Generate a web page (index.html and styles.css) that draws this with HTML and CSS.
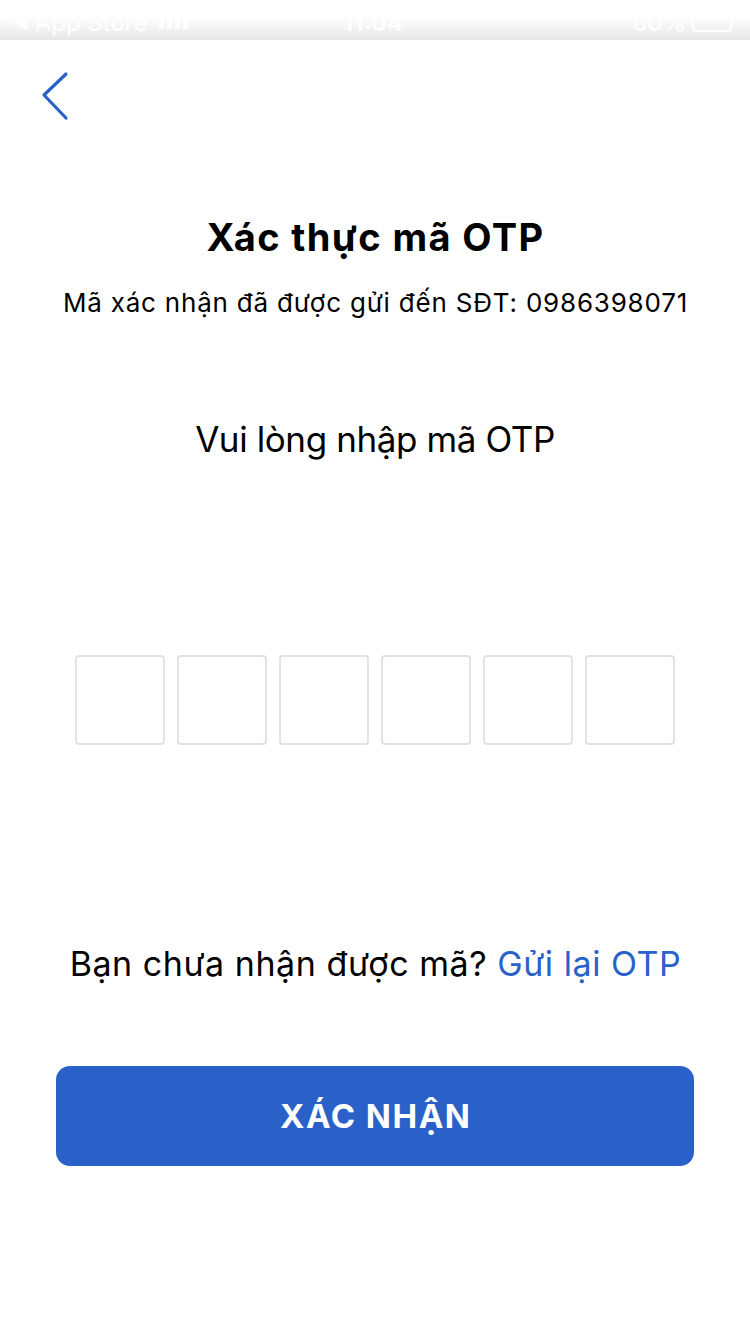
FILE: index.html
```html
<!DOCTYPE html>
<html lang="vi">
<head>
<meta charset="utf-8">
<title>Xác thực mã OTP</title>
<link rel="stylesheet" href="styles.css">
</head>
<body>
<div class="statusbar">
  <div class="sb-left"><span class="sb-back">◀</span> App Store <span class="sb-signal"><i></i><i></i><i></i><i></i></span></div>
  <div class="sb-time">11:04</div>
  <div class="sb-right">60% <span class="sb-batt"></span></div>
</div>
<main class="sheet">
  <div class="nav">
    <svg class="back" width="30" height="50" viewBox="0 0 30 50" aria-label="Quay lại">
      <path d="M26 3 L4 24 L26 47" fill="none" stroke="#2961C9" stroke-width="3.2" stroke-linecap="round" stroke-linejoin="round"/>
    </svg>
  </div>
  <h1 class="title">Xác thực mã OTP</h1>
  <p class="subtitle">Mã xác nhận đã được gửi đến SĐT: 0986398071</p>
  <p class="prompt">Vui lòng nhập mã OTP</p>
  <div class="otp">
    <div class="cell"></div>
    <div class="cell"></div>
    <div class="cell"></div>
    <div class="cell"></div>
    <div class="cell"></div>
    <div class="cell"></div>
  </div>
  <p class="resend">Bạn chưa nhận được mã? <a class="link">Gửi lại OTP</a></p>
  <button class="confirm">XÁC NHẬN</button>
</main>
</body>
</html>
```
FILE: styles.css
```css
* { box-sizing: border-box; }
html, body {
  margin: 0;
  padding: 0;
}
body {
  width: 750px;
  height: 1334px;
  background: #ffffff;
  font-family: Inter, "Noto Sans", sans-serif;
  color: #000;
  overflow: hidden;
}
.statusbar {
  height: 40px;
  display: flex;
  align-items: flex-start;
  justify-content: space-between;
  padding: 9px 18px 0 14px;
  background: linear-gradient(to bottom, #ffffff 0, #ffffff 16px, #f3f3f3 28px, #e6e6e6 40px);
  color: #ffffff;
  font-size: 24px;
  line-height: 28px;
}
.sb-left { display: flex; align-items: center; gap: 6px; width: 200px; }
.sb-back { font-size: 16px; }
.sb-signal { display: inline-flex; gap: 3px; align-items: flex-end; margin-left: 6px; }
.sb-signal i { display: block; width: 5px; height: 12px; background: #fff; }
.sb-time { font-weight: 600; }
.sb-right { display: flex; align-items: center; gap: 6px; width: 200px; justify-content: flex-end; }
.sb-batt { display: inline-block; width: 40px; height: 18px; border: 2px solid #fff; border-radius: 5px; }

.sheet {
  display: flex;
  flex-direction: column;
  align-items: center;
}
.nav {
  align-self: stretch;
  height: 100px;
  padding: 31px 0 0 40px;
}
.back { display: block; }
.title {
  margin: 77px 0 0;
  padding-left: 1px;
  font-size: 38px;
  line-height: 40px;
  font-weight: 700;
  letter-spacing: 1.4px;
}
.subtitle {
  margin: 31px 0 0;
  padding-left: 1px;
  font-size: 26px;
  line-height: 30px;
  font-weight: 400;
  letter-spacing: 0.8px;
}
.prompt {
  margin: 99px 0 0;
  font-size: 35px;
  line-height: 44px;
  letter-spacing: -0.4px;
}
.otp {
  margin-top: 194px;
  display: flex;
  gap: 12px;
}
.cell {
  width: 90px;
  height: 90px;
  border: 2px solid #e2e2e2;
  border-radius: 4px;
  background: #fff;
}
.resend {
  margin: 199px 0 0;
  padding-left: 1px;
  font-size: 34px;
  line-height: 40px;
  letter-spacing: 0.55px;
}
.link { color: #2961C9; }
.confirm {
  margin-top: 82px;
  width: 638px;
  height: 100px;
  border: none;
  border-radius: 14px;
  background: #2961C9;
  color: #ffffff;
  font-family: Inter, "Noto Sans", sans-serif;
  font-size: 33px;
  font-weight: 700;
  letter-spacing: 1.5px;
  padding: 0 0 0 1.5px;
}
```
